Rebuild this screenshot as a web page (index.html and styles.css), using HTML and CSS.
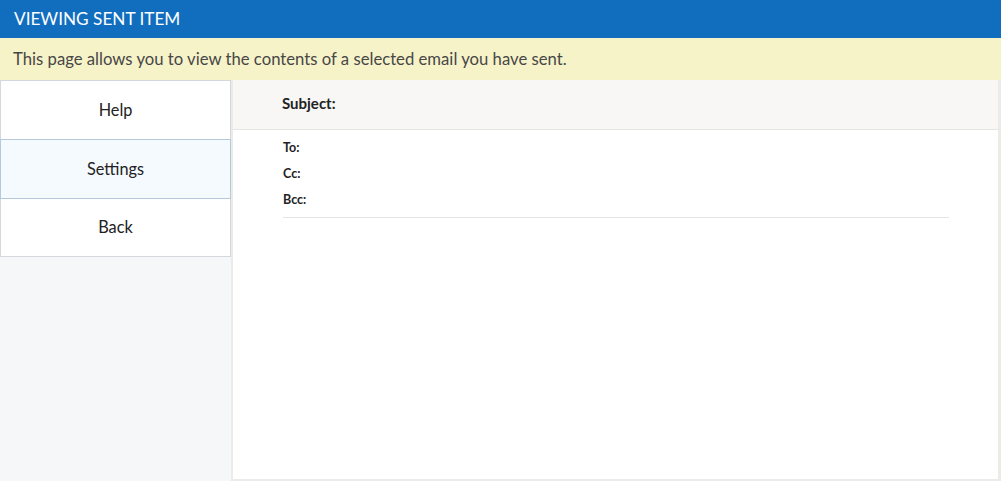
FILE: index.html
```html
<!DOCTYPE html>
<html>
<head>
<meta charset="utf-8">
<link rel="stylesheet" href="styles.css">
</head>
<body>
<div class="page">
  <header class="title-bar">VIEWING SENT ITEM</header>
  <div class="info-bar">This page allows you to view the contents of a selected email you have sent.</div>
  <div class="content">
    <nav class="sidebar">
      <div class="nav-btn">Help</div>
      <div class="nav-btn active">Settings</div>
      <div class="nav-btn">Back</div>
    </nav>
    <main class="panel">
      <div class="subject-bar">Subject:</div>
      <div class="meta">
        <div class="meta-row">To:</div>
        <div class="meta-row">Cc:</div>
        <div class="meta-row">Bcc:</div>
        <div class="divider"></div>
      </div>
    </main>
  </div>
</div>
</body>
</html>
```

FILE: styles.css
```css
* { box-sizing: border-box; }
html, body { margin: 0; padding: 0; }
body {
  font-family: Lato, "Open Sans", "Liberation Sans", sans-serif;
  color: #333;
  width: 1001px;
  height: 481px;
  overflow: hidden;
  background: #f5f7f9;
}
.page { display: flex; flex-direction: column; height: 481px; }
.title-bar {
  height: 38px;
  background: #116ebf;
  color: #fff;
  font-size: 17.2px;
  line-height: 38px;
  padding-left: 14px;
}
.info-bar {
  height: 42px;
  background: #f7f3c9;
  color: #474747;
  font-size: 16.7px;
  line-height: 42px;
  padding-left: 13px;
}
.content { display: flex; flex: 1; min-height: 0; }
.sidebar {
  width: 231px;
  flex: none;
  background: #f6f7f9;
  display: flex;
  flex-direction: column;
}
.nav-btn {
  height: 60px;
  background: #fff;
  border: 1px solid #d3d8de;
  margin-top: -1px;
  display: flex;
  align-items: center;
  justify-content: center;
  padding-bottom: 2px;
  font-size: 16.3px;
  color: #222;
}
.nav-btn:first-child { margin-top: 0; }
.nav-btn:last-child { height: 59px; }
.nav-btn.active {
  background: #f5faff;
  border-color: #b5c9dd;
  position: relative;
}
.panel {
  flex: 1;
  background: #fff;
  border-left: 2px solid #ebebe7;
  border-right: 3px solid #ebebe7;
  border-bottom: 2px solid #ebebe7;
  display: flex;
  flex-direction: column;
}
.subject-bar {
  height: 50px;
  background: #f8f7f5;
  border-bottom: 1px solid #e6e6e3;
  font-weight: bold;
  font-size: 15px;
  line-height: 46px;
  padding-left: 49px;
  color: #222;
}
.meta {
  padding: 5px 0 0 50px;
}
.meta-row {
  font-size: 12.5px;
  font-weight: bold;
  line-height: 26px;
  height: 26px;
  color: #222;
}
.divider {
  width: 666px;
  height: 1px;
  background: #e3e3e3;
  margin-top: 4px;
}
```
